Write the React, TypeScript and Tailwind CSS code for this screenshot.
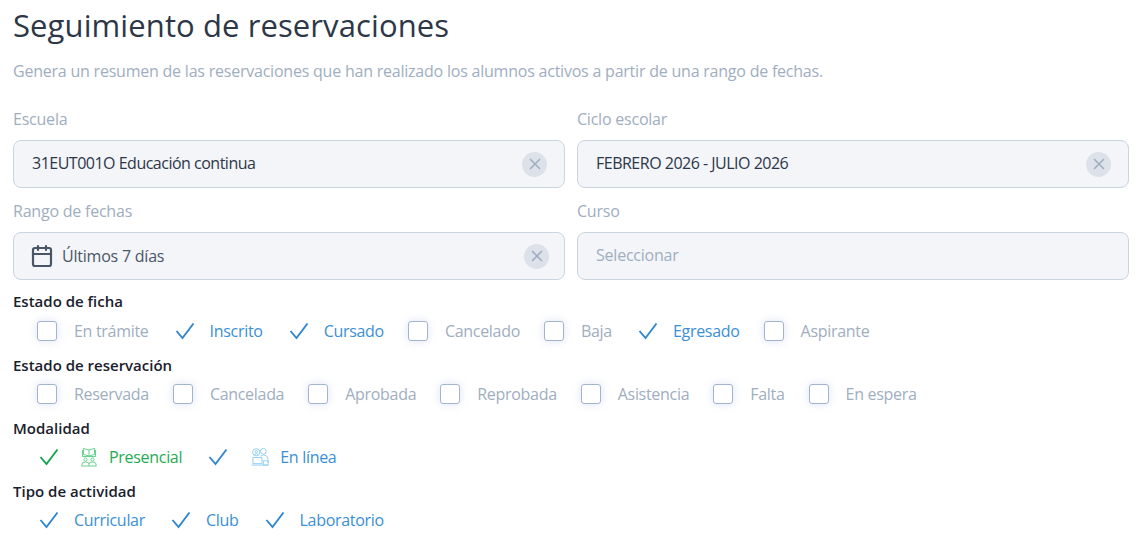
import { Calendar, X } from 'lucide-react';

const font = "[font-family:'Open_Sans','Noto_Sans',sans-serif]";

function Field({ label, value, placeholder, calendar, noClear }: { label: string; value?: string; placeholder?: string; calendar?: boolean; noClear?: boolean }) {
  return (
    <div className="flex flex-col">
      <label className="h-[24px] text-[16px] leading-[24px] text-[#a0aec0] tracking-[-0.22px]">{label}</label>
      <div className={`mt-[9px] flex h-[48px] items-center rounded-[8px] border border-[#cbd5e0] bg-[#f3f5f8] text-[16px] text-[#2d3748] ${calendar ? 'pr-[15px]' : 'pr-[17px]'}`}>
        {calendar ? <Calendar className="ml-[16px] mr-[8px] h-[24px] w-[24px] text-[#4a5568]" strokeWidth={2.2} /> : null}
        {value ? <span className={calendar ? 'text-[#4a5568] tracking-[-0.22px]' : 'mb-[2px] ml-[18px] tracking-[-0.5px]'}>{value}</span> : null}
        {placeholder ? <span className="mb-[2px] ml-[18px] text-[#a0aec0] tracking-[-0.22px]">{placeholder}</span> : null}
        {!noClear && (
          <span className="ml-auto flex h-[25px] w-[25px] items-center justify-center rounded-full bg-[#dde2ea] text-[#a0aec0]">
            <X className="h-[18px] w-[18px]" strokeWidth={2.2} />
          </span>
        )}
      </div>
    </div>
  );
}

function Opt({ label, checked, green, icon }: { label: string; checked?: boolean; green?: boolean; icon?: React.ReactNode }) {
  return (
    <div className="flex h-[24px] items-center">
      {checked ? (
        <svg viewBox="0 0 20 20" className={`h-[20px] w-[20px] overflow-visible ${green ? 'text-[#16a34a]' : 'text-[#2f86cf]'}`} fill="none" stroke="currentColor" strokeWidth="1.9">
          <path d="M3.5 10 L9.5 17 L20.5 2.5" />
        </svg>
      ) : (
        <span className="h-[20px] w-[20px] rounded-[3px] border border-[#a3b4cf] bg-white shadow-[0_0_8px_rgba(160,174,230,0.35)]" />
      )}
      {icon}
      <span className={`text-[16px] tracking-[-0.3px] ${green ? 'ml-[11px]' : icon ? 'ml-[10px]' : 'ml-[17px]'} ${checked ? (green ? 'text-[#1fab53]' : 'text-[#3b8fd6]') : 'text-[#a0aec0]'}`}>{label}</span>
    </div>
  );
}

function Group({ title, first, children }: { title: string; first?: boolean; children: React.ReactNode }) {
  return (
    <div className={first ? 'h-[64px]' : 'h-[63px]'}>
      <div className="h-[24px] text-[15px] font-semibold leading-[24px] text-[#1a202c]">{title}</div>
      <div className={`flex gap-[24px] pl-[24px] ${first ? 'mt-[6px]' : 'mt-[5px]'}`}>{children}</div>
    </div>
  );
}

function PresencialIcon() {
  return (
    <svg viewBox="0 0 18 20" className="ml-[23px] h-[20px] w-[18px] text-[#68d391]" fill="none" stroke="currentColor" strokeWidth="1">
      <path d="M3.5 1.5 L9 3 L14.5 1.5 V7.5 L9 9 L3.5 7.5 Z M9 3 V9" />
      <path d="M2.5 3 V9.5 H15.5 V3" />
      <circle cx="5.5" cy="12.5" r="1.6" />
      <circle cx="12.5" cy="12.5" r="1.6" />
      <path d="M2 19 V17 Q2 15 5.5 15 Q9 15 9 17 V19 M9 17 Q9 15 12.5 15 Q16 15 16 17 V19 M1.5 19 H16.5" />
    </svg>
  );
}

function OnlineIcon() {
  return (
    <svg viewBox="0 0 20 20" className="ml-[25px] h-[20px] w-[19px] text-[#90cdf4]" fill="none" stroke="currentColor" strokeWidth="1">
      <circle cx="5.5" cy="5" r="3.8" />
      <circle cx="5.5" cy="4.3" r="1.2" />
      <path d="M3.3 7.5 Q5.5 5.5 7.7 7.5" />
      <circle cx="13" cy="4" r="3" />
      <path d="M10 9 Q13 6.5 16.5 9 Q18 10.5 18 13.5 V16" />
      <path d="M2 10.5 H11.5 V17 H2 Z" />
      <path d="M0.5 18.5 H18.5 M13 14 H18 V18.5 H13 Z" />
    </svg>
  );
}

export default function App() {
  return (
    <div className={`h-[546px] w-[1145px] overflow-hidden bg-white pl-[13px] pr-[16px] ${font}`}>
      <h1 className="pt-[5px] text-[31px] leading-[40px] font-normal text-[#2d3748] tracking-[0.1px]">Seguimiento de reservaciones</h1>
      <p className="mt-[16px] h-[22px] text-[16px] leading-[20px] text-[#a0aec0] tracking-[-0.22px]">
        Genera un resumen de las reservaciones que han realizado los alumnos activos a partir de una rango de fechas.
      </p>
      <div className="mt-[24px] grid grid-cols-2 gap-x-[12px] gap-y-[11px]">
        <Field label="Escuela" value="31EUT001O Educación continua" />
        <Field label="Ciclo escolar" value="FEBRERO 2026 - JULIO 2026" />
        <Field label="Rango de fechas" value="Últimos 7 días" calendar />
        <Field label="Curso" placeholder="Seleccionar" noClear />
      </div>
      <div className="mt-[9px]">
        <Group title="Estado de ficha" first>
          <Opt label="En trámite" />
          <Opt label="Inscrito" checked />
          <Opt label="Cursado" checked />
          <Opt label="Cancelado" />
          <Opt label="Baja" />
          <Opt label="Egresado" checked />
          <Opt label="Aspirante" />
        </Group>
        <Group title="Estado de reservación">
          <Opt label="Reservada" />
          <Opt label="Cancelada" />
          <Opt label="Aprobada" />
          <Opt label="Reprobada" />
          <Opt label="Asistencia" />
          <Opt label="Falta" />
          <Opt label="En espera" />
        </Group>
        <Group title="Modalidad">
          <Opt label="Presencial" checked green icon={<PresencialIcon />} />
          <Opt label="En línea" checked icon={<OnlineIcon />} />
        </Group>
        <Group title="Tipo de actividad">
          <Opt label="Curricular" checked />
          <Opt label="Club" checked />
          <Opt label="Laboratorio" checked />
        </Group>
      </div>
    </div>
  );
}
